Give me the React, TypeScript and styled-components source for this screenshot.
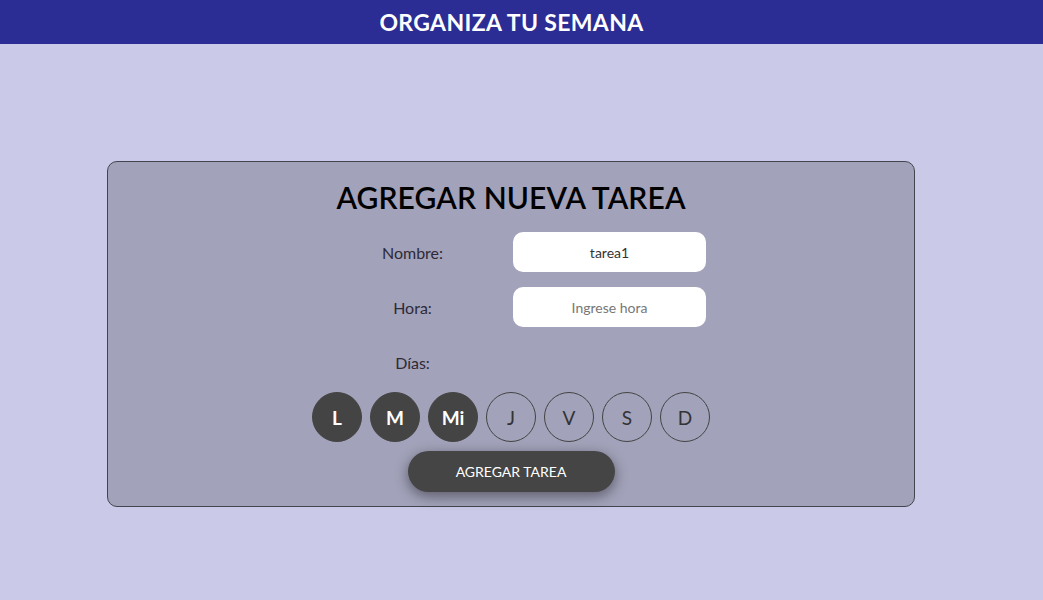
import React from "react";
import styled, { createGlobalStyle } from "styled-components";

const Global = createGlobalStyle`
  html, body { margin: 0; padding: 0; }
  body {
    background: #cbc9e8;
    font-family: "Lato", "Noto Sans", sans-serif;
    width: 1043px;
    min-height: 600px;
  }
`;

const Page = styled.div`
  display: flex;
  flex-direction: column;
  min-height: 600px;
`;

const Header = styled.header`
  height: 44px;
  background: #2b2c94;
  display: flex;
  align-items: center;
  justify-content: center;
  padding-right: 20px;
`;

const HeaderTitle = styled.h1`
  margin: 0;
  color: #fff;
  font-size: 23px;
  font-weight: 700;
  letter-spacing: 0.35px;
`;

const Main = styled.main`
  padding: 117px 128px 0 107px;
`;

const Card = styled.section`
  border: 1px solid #44444f;
  border-radius: 10px;
  background: #a2a2ba;
  display: flex;
  flex-direction: column;
  align-items: center;
  padding: 17px 0 14px;
`;

const CardTitle = styled.h2`
  margin: 0 0 17px;
  font-size: 30px;
  line-height: 36px;
  font-weight: 600;
  letter-spacing: 0.1px;
  color: #000;
`;

const FormGrid = styled.div`
  display: grid;
  grid-template-columns: 197px 197px;
  grid-auto-rows: 40px;
  row-gap: 15px;
  align-items: center;
`;

const Label = styled.label`
  text-align: center;
  font-size: 16px;
  color: #2e2a36;
`;

const Input = styled.input`
  width: 193px;
  height: 40px;
  margin-left: 2px;
  box-sizing: border-box;
  border: none;
  border-radius: 10px;
  background: #fff;
  text-align: center;
  font-family: inherit;
  font-size: 14px;
  color: #333;
  outline: none;
  &::placeholder { color: #777; }
`;

const DaysRow = styled.div`
  display: flex;
  gap: 8px;
  margin-top: 10px;
`;

const DayButton = styled.button<{ $active: boolean }>`
  width: 50px;
  height: 50px;
  border-radius: 50%;
  box-sizing: border-box;
  border: 1px solid #444;
  background: ${(p) => (p.$active ? "#444444" : "transparent")};
  color: ${(p) => (p.$active ? "#fff" : "#333")};
  font-family: inherit;
  font-size: 19px;
  font-weight: ${(p) => (p.$active ? 700 : 400)};
  display: flex;
  align-items: center;
  justify-content: center;
  padding: 0;
`;

const SubmitButton = styled.button`
  margin-top: 9px;
  width: 207px;
  height: 41px;
  border: none;
  border-radius: 21px;
  background: #454545;
  color: #fff;
  font-family: inherit;
  font-size: 14px;
  box-shadow: 0 4px 14px rgba(0, 0, 0, 0.45);
`;

const days = [
  { k: "L", active: true },
  { k: "M", active: true },
  { k: "Mi", active: true },
  { k: "J", active: false },
  { k: "V", active: false },
  { k: "S", active: false },
  { k: "D", active: false },
];

export default function App() {
  return (
    <>
      <Global />
      <Page>
        <Header>
          <HeaderTitle>ORGANIZA TU SEMANA</HeaderTitle>
        </Header>
        <Main>
          <Card>
            <CardTitle>AGREGAR NUEVA TAREA</CardTitle>
            <FormGrid>
              <Label>Nombre:</Label>
              <Input defaultValue="tarea1" />
              <Label>Hora:</Label>
              <Input placeholder="Ingrese hora" />
              <Label>Días:</Label>
              <div />
            </FormGrid>
            <DaysRow>
              {days.map((d) => (
                <DayButton key={d.k} $active={d.active}>
                  {d.k}
                </DayButton>
              ))}
            </DaysRow>
            <SubmitButton>AGREGAR TAREA</SubmitButton>
          </Card>
        </Main>
      </Page>
    </>
  );
}
